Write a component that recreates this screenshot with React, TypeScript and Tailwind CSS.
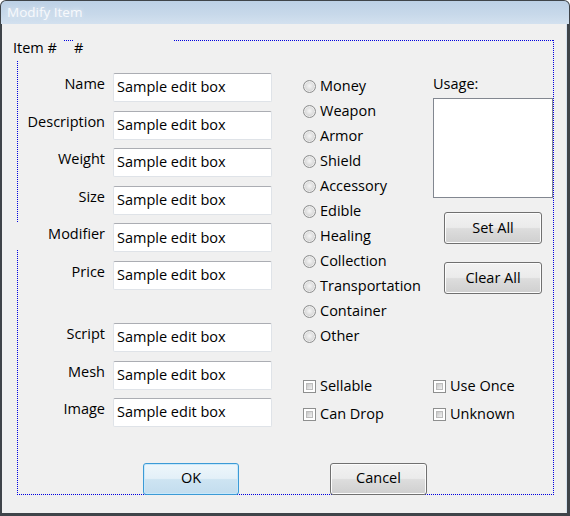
import React from "react";

const font = { fontFamily: '"Open Sans", "Noto Sans", sans-serif' };

function EditBox() {
  return (
    <div className="h-[29px] w-[159px] bg-white border border-[#dfe3e8] border-t-[#abadb3] rounded-[2px] flex items-center pl-[3px] text-[14.5px] text-black leading-none">
      Sample edit box
    </div>
  );
}

function Field({ label }: { label: string }) {
  return (
    <div className="flex items-start h-[29px]">
      <div className="w-[92px] text-right text-[14.5px] leading-[22px] text-black">{label}</div>
      <div className="ml-[8px]">
        <EditBox />
      </div>
    </div>
  );
}

function Radio({ label }: { label: string }) {
  return (
    <div className="h-[25px] flex items-center">
      <div className="w-[13px] h-[13px] rounded-full border border-[#8e8f8f] bg-[radial-gradient(circle_at_50%_45%,#f6f6f6_0%,#dcdcdc_50%,#b4b4b4_100%)] shadow-[inset_0_0_0_1px_#eeeeee]" />
      <span className="ml-[4px] text-[14.5px] text-black leading-none">{label}</span>
    </div>
  );
}

function Check({ label }: { label: string }) {
  return (
    <div className="h-[28px] flex items-center">
      <div className="w-[13px] h-[13px] border border-[#8e8f8f] bg-white p-[2px]">
        <div className="w-full h-full bg-[linear-gradient(135deg,#c6c6c6,#f2f2f2)] border border-[#bcbcbc]" />
      </div>
      <span className="ml-[4px] text-[14.5px] text-black leading-none">{label}</span>
    </div>
  );
}

function Button({ label, primary }: { label: string; primary?: boolean }) {
  return (
    <div
      className={
        "h-[32px] flex items-center justify-center rounded-[3px] border text-[14.5px] text-black leading-none " +
        (primary
          ? "border-[#3c9ad6] bg-[linear-gradient(180deg,#eef6fb_0%,#e3f0f8_48%,#cde4f2_52%,#c3ddee_100%)] shadow-[inset_0_0_0_1px_#c8e8fa]"
          : "border-[#707070] bg-[linear-gradient(180deg,#f2f2f2_0%,#ebebeb_48%,#dddddd_52%,#cfcfcf_100%)] shadow-[inset_0_0_0_1px_#fcfcfc]")
      }
    >
      {label}
    </div>
  );
}

const dotH = "absolute h-px bg-[repeating-linear-gradient(90deg,#0000e0_0_1px,transparent_1px_2px)]";
const dotV = "absolute w-px bg-[repeating-linear-gradient(180deg,#0000e0_0_1px,transparent_1px_2px)]";

export default function App() {
  const radios = [
    "Money",
    "Weapon",
    "Armor",
    "Shield",
    "Accessory",
    "Edible",
    "Healing",
    "Collection",
    "Transportation",
    "Container",
    "Other",
  ];
  return (
    <div
      style={font}
      className="w-[570px] h-[516px] flex flex-col rounded-t-[6px] bg-[#3f4449] overflow-hidden"
    >
      <div className="h-[23px] mx-px mt-px rounded-t-[5px] bg-[linear-gradient(180deg,#bcd0e5_0%,#c8d9ea_60%,#d3e1ef_100%)] flex items-center pl-[6px]">
        <span className="text-[13.5px] text-[#f7f9fc] leading-none [text-shadow:0_0_4px_#e6eef6]">Modify Item</span>
      </div>
      <div className="flex flex-1 mb-[3px] ml-[2px] mr-[3px] border-r border-[#d5e2ef]">
        <div className="relative flex-1 bg-[#f0f0f0] flex flex-col">
          {/* focus rectangle */}
          <div className={dotH + " top-[16px] left-[62px] w-[10px]"} />
          <div className={dotH + " top-[16px] left-[172px] w-[380px]"} />
          <div className={dotV + " top-[16px] left-[551px] h-[455px]"} />
          <div className={dotV + " top-[37px] left-[15px] h-[162px]"} />
          <div className={dotV + " top-[226px] left-[15px] h-[245px]"} />
          <div className={dotH + " top-[470px] left-[15px] w-[537px]"} />

          <div className="h-[49px] flex items-start pt-[14px] pl-[11px] text-[14.5px] text-black leading-[20px]">
            <span>Item #</span>
            <span className="ml-[17px]">#</span>
          </div>

          <div className="flex pl-[11px]">
            <div className="flex flex-col">
              <div className="flex flex-col gap-[8.6px]">
                <Field label="Name" />
                <Field label="Description" />
                <Field label="Weight" />
                <Field label="Size" />
                <Field label="Modifier" />
                <Field label="Price" />
              </div>
              <div className="flex flex-col gap-[8.6px] mt-[33px]">
                <Field label="Script" />
                <Field label="Mesh" />
                <Field label="Image" />
              </div>
            </div>

            <div className="ml-[31px] flex flex-col">
              <div className="flex">
                <div className="w-[130px] flex flex-col pt-[0.5px]">
                  {radios.map((r) => (
                    <Radio key={r} label={r} />
                  ))}
                </div>
                <div className="w-[120px] flex flex-col">
                  <div className="h-[22px] text-[14.5px] text-black leading-[22px]">Usage:</div>
                  <div className="mt-[3px] h-[100px] bg-white border border-[#828790]" />
                  <div className="ml-[11px] w-[98px] mt-[14px]">
                    <Button label="Set All" />
                  </div>
                  <div className="ml-[11px] w-[98px] mt-[18px]">
                    <Button label="Clear All" />
                  </div>
                </div>
              </div>
              <div className="mt-[24px] grid grid-cols-[130px_120px]">
                <Check label="Sellable" />
                <Check label="Use Once" />
                <Check label="Can Drop" />
                <Check label="Unknown" />
              </div>
            </div>
          </div>

          <div className="relative flex mt-[34px] pl-[141px]">
            <div className="w-[96px]">
              <Button label="OK" primary />
            </div>
            <div className="w-[97px] ml-[91px]">
              <Button label="Cancel" />
            </div>
          </div>
        </div>
      </div>
    </div>
  );
}
